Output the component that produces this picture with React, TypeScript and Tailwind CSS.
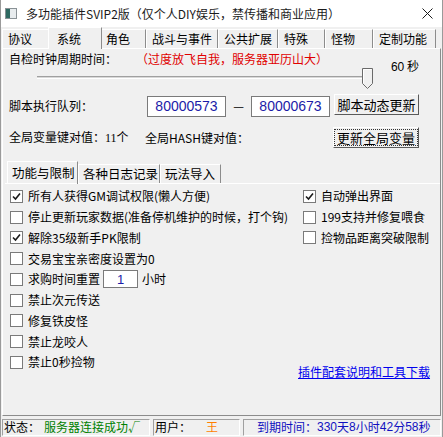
import clsx from "clsx";

const mainTabs = [
  { label: "协议", w: "w-[48px]" },
  { label: "系统", w: "w-[54px]", active: true },
  { label: "角色", w: "w-[46px]" },
  { label: "战斗与事件", w: "w-[72px]" },
  { label: "公共扩展", w: "w-[60px]" },
  { label: "特殊", w: "w-[47px]" },
  { label: "怪物", w: "w-[48px]" },
  { label: "定制功能", w: "w-[63px]" },
];

const subTabs = [
  { label: "功能与限制", w: "w-[71px]", active: true },
  { label: "各种日志记录", w: "w-[82px]" },
  { label: "玩法导入", w: "w-[61px]" },
];

const leftChecks = [
  { label: "所有人获得GM调试权限(懒人方便)", on: true },
  { label: "停止更新玩家数据(准备停机维护的时候，打个钩)", on: false },
  { label: "解除35级新手PK限制", on: true },
  { label: "交易宝宝亲密度设置为0", on: false },
  { label: "求购时间重置", on: false, hours: true },
  { label: "禁止次元传送", on: false },
  { label: "修复铁皮怪", on: false },
  { label: "禁止龙咬人", on: false },
  { label: "禁止0秒捡物", on: false },
];

const rightChecks = [
  { label: "自动弹出界面", on: true },
  { label: "199支持并修复喂食", on: false },
  { label: "捡物品距离突破限制", on: false },
];

function CheckBox({ on }: { on: boolean }) {
  return (
    <span className="flex h-[13px] w-[13px] shrink-0 items-center justify-center border border-[#7a7a7a] bg-white">
      {on && (
        <svg width="9" height="9" viewBox="0 0 9 9">
          <path d="M1 4.5 L3.5 7 L8 1.5" fill="none" stroke="#1a1a1a" strokeWidth="1.6" />
        </svg>
      )}
    </span>
  );
}

function Check({ label, on, hours }: { label: string; on: boolean; hours?: boolean }) {
  return (
    <div className="flex h-[20.75px] items-center">
      <CheckBox on={on} />
      <span className="ml-[5px] whitespace-nowrap">{label}</span>
      {hours && (
        <>
          <span className="ml-[3px] flex h-[18px] w-[35px] items-center justify-center border border-[#7a7a7a] bg-white font-['Liberation_Sans'] text-[13px] text-[#1c1ca8]">
            1
          </span>
          <span className="ml-[4px]">小时</span>
        </>
      )}
    </div>
  );
}

function Button({ label, focused, className }: { label: string; focused?: boolean; className?: string }) {
  return (
    <div
      className={clsx(
        "flex h-[21px] items-center justify-center border border-t-white border-l-white border-r-[#5a5a5a] border-b-[#5a5a5a] bg-[#f0f0f0] text-[13px]",
        className
      )}
    >
      <span className={clsx("px-[2px] leading-[15px]", focused && "outline outline-1 outline-dotted outline-[#333]")}>{label}</span>
    </div>
  );
}

export default function App() {
  return (
    <div className="flex h-[437px] w-[443px] flex-col overflow-hidden border-x border-[#9a9a9a] bg-[#f0f0f0] font-['Noto_Sans_CJK_SC',sans-serif] text-[12px] text-black">
      {/* title bar */}
      <div className="flex h-[27px] shrink-0 items-center bg-white">
        <svg className="ml-[4px]" width="12" height="11" viewBox="0 0 12 11">
          <rect x="0.5" y="0.5" width="11" height="10" fill="#e8ecee" stroke="#8a9296" />
          <rect x="1" y="1" width="4" height="9" fill="#2e6a62" />
        </svg>
        <span className="ml-[9px] text-[12px] leading-none text-[#1a1a1a]">多功能插件SVIP2版（仅个人DIY娱乐，禁传播和商业应用）</span>
        <svg className="ml-auto mr-[9px]" width="11" height="11" viewBox="0 0 11 11">
          <path d="M0.5 0.5 L10.5 10.5 M10.5 0.5 L0.5 10.5" stroke="#1a1a1a" strokeWidth="1" />
        </svg>
      </div>

      {/* main tab strip */}
      <div className="flex h-[21px] shrink-0 items-end pl-[1px]">
        {mainTabs.map((t) => (
          <div
            key={t.label}
            className={clsx(
              "flex items-center border-t border-l border-white border-r border-r-[#8c8c8c] bg-[#f0f0f0] pl-[5px] whitespace-nowrap",
              t.w,
              t.active ? "relative z-10 -mx-[2px] -mb-px h-[22px] pl-[8px]" : "h-[19px]"
            )}
          >
            {t.label}
          </div>
        ))}
      </div>

      {/* system page */}
      <div className="mx-[1px] flex h-[368px] shrink-0 flex-col border border-t-white border-l-white border-r-[#8c8c8c] border-b-[#8c8c8c] pl-[6px]">
        <div className="flex h-[19px] items-start pt-[3px] leading-[14px]">
          <span className="w-[127px]">自检时钟周期时间：</span>
          <span className="text-[#e00000]">（过度放飞自我，服务器亚历山大）</span>
          <span className="ml-auto mr-[21px] mt-[7px]">
            <span className="font-['Liberation_Sans']">60</span> 秒
          </span>
        </div>

        {/* slider */}
        <div className="relative ml-[28px] h-[21px] w-[334px]">
          <div className="absolute left-0 right-0 top-[8px] h-[3px] border-t border-[#a0a0a0] border-b border-b-white bg-[#d8d8d8]" />
          <svg className="absolute left-[325px] top-0" width="11" height="21" viewBox="0 0 11 21">
            <path d="M0.5 0.5 H10.5 V15.5 L5.5 20.5 L0.5 15.5 Z" fill="#f0f0f0" stroke="#6a6a6a" />
            <path d="M1.5 1.5 H9.5 M1.5 1.5 V15" stroke="#ffffff" />
          </svg>
        </div>

        <div className="mt-[5px] flex h-[23px] items-start">
          <span className="flex h-[23px] w-[138px] items-center">脚本执行队列：</span>
          <span className="mt-[2px] flex h-[21px] w-[79px] items-center justify-center border border-[#7a7a7a] bg-white font-['Liberation_Sans'] text-[14px] text-[#1c1ca8]">
            80000573
          </span>
          <span className="flex h-[23px] w-[25px] items-center justify-center">—</span>
          <span className="mt-[2px] flex h-[21px] w-[79px] items-center justify-center border border-[#7a7a7a] bg-white font-['Liberation_Sans'] text-[14px] text-[#1c1ca8]">
            80000673
          </span>
          <Button label="脚本动态更新" className="ml-[4px] w-[85px]" />
        </div>

        <div className="mt-[10px] flex h-[21px] items-center">
          <span className="w-[136px]">
            全局变量键对值：<span className="font-['Liberation_Serif']">11</span>个
          </span>
          <span>全局HASH键对值：</span>
          <Button label="更新全局变量" focused className="ml-auto mr-[21px] w-[86px]" />
        </div>

        {/* sub tab strip */}
        <div className="-ml-[2px] mt-[13px] flex h-[22px] items-end">
          {subTabs.map((t) => (
            <div
              key={t.label}
              className={clsx(
                "flex items-center border-t border-l border-white border-r border-r-[#8c8c8c] pl-[4px] text-[12.5px] whitespace-nowrap",
                t.w,
                t.active ? "relative z-10 -mb-px h-[23px]" : "h-[19px]"
              )}
            >
              {t.label}
            </div>
          ))}
        </div>

        <div className="-ml-[4px] flex flex-1 border-t border-white pt-[2px]">
          <div className="flex w-[293px] flex-col pl-[5px]">
            {leftChecks.map((c) => (
              <Check key={c.label} {...c} />
            ))}
          </div>
          <div className="flex flex-1 flex-col">
            <div className="flex flex-col pl-[5px]">
              {rightChecks.map((c) => (
                <Check key={c.label} {...c} />
              ))}
            </div>
            <a className="mt-[117px] whitespace-nowrap leading-[14px] text-[#0000ee] underline">插件配套说明和工具下载</a>
          </div>
        </div>
      </div>

      {/* status bar */}
      <div className="flex h-[21px] shrink-0 items-center gap-[3px] px-[1px] pt-[1px]">
        <div className="flex h-[17px] w-[148px] items-center border border-t-[#a0a0a0] border-l-[#a0a0a0] border-r-white border-b-white pl-[1px]">
          <span className="w-[40px]">状态：</span>
          <span className="text-[#008000]">服务器连接成功√</span>
        </div>
        <div className="flex h-[17px] w-[87px] items-center border border-t-[#a0a0a0] border-l-[#a0a0a0] border-r-white border-b-white pl-[1px]">
          <span className="w-[51px]">用户：</span>
          <span className="text-[#ff7f00]">王</span>
        </div>
        <div className="flex h-[17px] flex-1 items-center border border-t-[#a0a0a0] border-l-[#a0a0a0] border-r-white border-b-white pl-[13px] text-[#1010c0]">
          到期时间：<span className="font-['Liberation_Sans']">330</span>天<span className="font-['Liberation_Sans']">8</span>小时
          <span className="font-['Liberation_Sans']">42</span>分<span className="font-['Liberation_Sans']">58</span>秒
        </div>
      </div>
    </div>
  );
}
